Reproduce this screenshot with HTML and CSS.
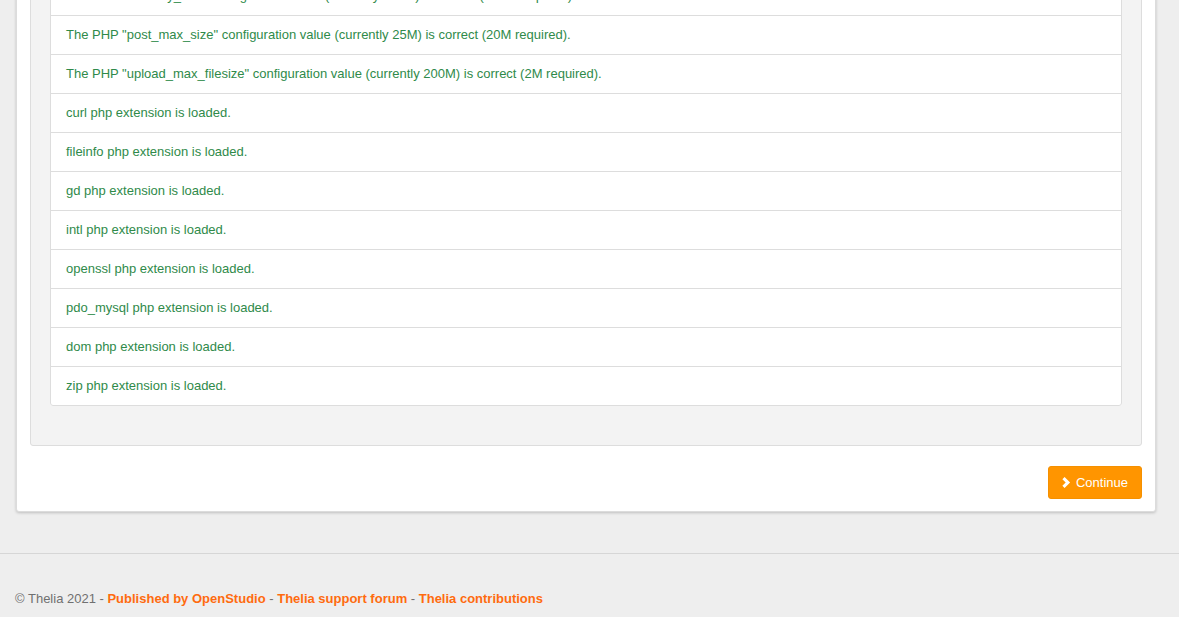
FILE: index.html
```html
<!DOCTYPE html>
<html lang="en">
<head>
    <meta charset="UTF-8">
    <meta name="viewport" content="width=device-width, initial-scale=1.0">
    <title>Thelia installation - Checking permissions</title>
    <link rel="stylesheet" href="styles.css">
</head>
<body>
    <div class="page">
        <div class="install-card">
            <div class="well">
                <ul class="check-list">
                    <li>The PHP "memory_limit" configuration value (currently 128M) is correct (128M required).</li>
                    <li>The PHP "post_max_size" configuration value (currently 25M) is correct (20M required).</li>
                    <li>The PHP "upload_max_filesize" configuration value (currently 200M) is correct (2M required).</li>
                    <li>curl php extension is loaded.</li>
                    <li>fileinfo php extension is loaded.</li>
                    <li>gd php extension is loaded.</li>
                    <li>intl php extension is loaded.</li>
                    <li>openssl php extension is loaded.</li>
                    <li>pdo_mysql php extension is loaded.</li>
                    <li>dom php extension is loaded.</li>
                    <li>zip php extension is loaded.</li>
                </ul>
            </div>
            <div class="actions">
                <button type="button" class="btn-continue">
                    <svg class="chevron" viewBox="0 0 9 12" width="9" height="11" aria-hidden="true">
                        <path d="M2.4 0 L8.4 6 L2.4 12 L0 9.6 L3.6 6 L0 2.4 Z" fill="#fff"/>
                    </svg>
                    Continue
                </button>
            </div>
        </div>
    </div>

    <footer class="footer">
        <p>&copy; Thelia 2021 -
            <a href="#">Published by OpenStudio</a> -
            <a href="#">Thelia support forum</a> -
            <a href="#">Thelia contributions</a>
        </p>
    </footer>
</body>
</html>
```

FILE: styles.css
```css
body {
    font-family: "Liberation Sans", Arial, sans-serif;
    font-size: 13px;
    background-color: #eeeeee;
    color: #666;
    margin: 0;
    padding: 0;
}

/* page is shown scrolled down, the header is out of view */
.page {
    margin-top: -58px;
    padding-left: 16px;
}

.install-card {
    width: 1140px;
    box-sizing: border-box;
    background-color: #fff;
    border: 1px solid #dcdcdc;
    border-radius: 0 0 3px 3px;
    box-shadow: 0 1px 3px rgba(0, 0, 0, 0.2);
    padding: 13px 13px 12px 13px;
}

.well {
    background-color: #f3f3f3;
    border: 1px solid #dddddd;
    border-radius: 3px;
    padding: 19px;
}

.check-list {
    list-style: none;
    margin: 0 0 20px 0;
    padding: 0;
    background-color: #fff;
    border-radius: 3px;
}

.check-list li {
    color: #2f8a4a;
    line-height: 18px;
    padding: 10px 15px;
    border: 1px solid #dddddd;
    margin-bottom: -1px;
}

.check-list li:last-child {
    margin-bottom: 0;
    border-radius: 0 0 3px 3px;
}

.actions {
    display: flex;
    justify-content: flex-end;
    margin-top: 20px;
}

.btn-continue {
    display: flex;
    align-items: center;
    gap: 5px;
    height: 33px;
    padding: 0 13px 0 13px;
    background-color: #ff9500;
    color: #fff;
    border: 1px solid #f59000;
    border-radius: 3px;
    font-family: "Liberation Sans", Arial, sans-serif;
    font-size: 13px;
    cursor: pointer;
}

.footer {
    margin-top: 41px;
    border-top: 1px solid #d6d6d6;
    padding: 37px 15px 0 15px;
}

.footer p {
    margin: 0;
    color: #707070;
}

.footer a {
    color: #ff6b0f;
    font-weight: bold;
    text-decoration: none;
}
```
